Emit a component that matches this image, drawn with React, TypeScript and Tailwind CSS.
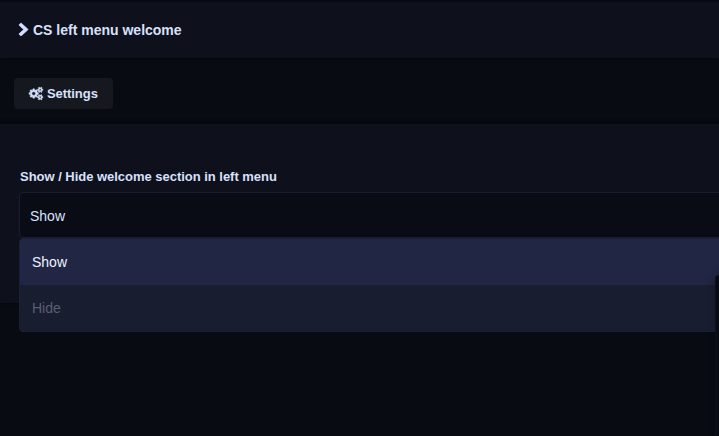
function ChevronIcon() {
  return (
    <svg viewBox="346 0 1036 1792" className="h-[14px] w-[9px] overflow-visible text-[#d3e1ff]" preserveAspectRatio="none" fill="currentColor" stroke="currentColor" strokeWidth="90" aria-hidden="true">
      <path d="M1363 877l-742 742q-19 19-45 19t-45-19l-166-166q-19-19-19-45t19-45l531-531-531-531q-19-19-19-45t19-45l166-166q19-19 45-19t45 19l742 742q19 19 19 45t-19 45z" />
    </svg>
  );
}

const SMALL_COG =
  "m640 533v140q0 16-149 31-12 27-30 52 51 113 51 138 0 4-4 7-122 71-124 71-8 0-46-47t-52-68q-20 2-30 2t-30-2q-14 21-52 68t-46 47q-2 0-124-71-4-3-4-7 0-25 51-138-18-25-30-52-149-15-149-31v-140q0-16 149-31 13-29 30-52-51-113-51-138 0-4 4-7 4-2 35-20t59-34 30-16q8 0 46 46.500t52 67.500q20-2 30-2t30 2q51-71 92-112l6-2q4 0 124 70 4 3 4 7 0 25-51 138 17 23 30 52 149 15 149 31z";

// Hub of a small cog, cut out of its body by the even-odd rule.
const SMALL_HUB =
  "M1664 1408q0-52-38-90t-90-38-90 38-38 90q0 53 37.500 90.500t90.500 37.500 90.500-37.500 37.500-90.500z";

function CogsIcon() {
  return (
    <svg viewBox="0 0 1920 1792" className="h-[13px] w-[14px] overflow-visible text-[#d3e1ff]" fill="currentColor" stroke="currentColor" strokeWidth="70" fillRule="evenodd" aria-hidden="true">
      <path d="M896 896q0-106-75-181t-181-75-181 75-75 181 75 181 181 75 181-75 75-181zM1280 805v185q0 10-7 19.500t-16 10.500l-155 24q-11 35-32 76 34 48 90 115 7 11 7 20 0 12-7 19-23 30-82.500 89.500t-78.500 59.500q-11 0-21-7l-115-90q-37 19-77 31-11 108-23 155-7 24-30 24h-186q-11 0-20-7.500t-10-17.500l-23-153q-34-10-75-31l-118 89q-7 7-20 7-11 0-21-8-144-133-144-160 0-9 7-19 10-14 41-53t47-61q-23-44-35-82l-152-24q-10-1-17-9.500t-7-19.500v-185q0-10 7-19.500t16-10.500l155-24q11-35 32-76-34-48-90-115-7-11-7-20 0-12 7-20 22-30 82-89t79-59q11 0 21 7l115 90q34-18 77-32 11-108 23-154 7-24 30-24h186q11 0 20 7.500t10 17.500l23 153q34 10 75 31l118-89q8-7 20-7 11 0 21 8 144 133 144 160 0 8-7 19-12 16-42 54t-45 60q23 48 34 82l152 23q10 2 17 10.500t7 19.500z" />
      <path d={`${SMALL_HUB}M1280 805${SMALL_COG}`} />
      <path d={`${SMALL_HUB}M1280 805${SMALL_COG}`} transform="translate(0 -1024)" />
    </svg>
  );
}

function Header() {
  return (
    <header className="flex h-14 shrink-0 items-center gap-[5px] bg-[#0e101c] pl-[19px] text-sm font-bold shadow-[0_1px_3px_rgba(0,0,0,0.45)]">
      <ChevronIcon />
      <h1 className="leading-5">CS left menu welcome</h1>
    </header>
  );
}

function Toolbar() {
  return (
    <nav className="flex h-[61px] shrink-0 items-start pt-5 pl-3.5">
      <button className="flex h-[31px] w-[99px] items-center gap-1 rounded-[4px] bg-[#15181f] pl-[15px] text-[13px] font-bold">
        <CogsIcon />
        <span className="tracking-[-0.06px]">Settings</span>
      </button>
    </nav>
  );
}

function Select() {
  return (
    <div className="relative w-[720px] text-sm">
      <div className="flex h-[46px] items-center rounded-[4px] border border-[#191d31] bg-[#0a0c15] pt-0.5 pl-2.5">
        Show
      </div>
      <ul className="absolute top-[46px] left-0 w-full overflow-hidden rounded-[4px] border border-[#1b2037] bg-[#191d30]">
        <li className="flex h-[46px] items-center bg-[#202643] pl-3 text-[#eef2ff]">Show</li>
        <li className="flex h-[46px] items-center pl-3 text-[#5d5f73]">Hide</li>
      </ul>
    </div>
  );
}

export default function App() {
  return (
    <div className="relative flex h-[436px] w-full flex-col overflow-hidden bg-[#080b12] pt-0.5 font-['Liberation_Sans',Arial,sans-serif] text-[#d8e1fb]">
      <Header />
      <Toolbar />
      <div className="h-[5px] shrink-0 bg-[#070910]" />
      <main className="h-[179px] shrink-0 bg-[#0e101b] pt-[43px] pl-[19px] shadow-[0_1px_3px_rgba(0,0,0,0.45)]">
        <label className="block h-[25px] pl-px text-[13px] leading-5 font-bold tracking-[-0.025px]">
          Show / Hide welcome section in left menu
        </label>
        <Select />
      </main>
      <aside className="absolute top-[275px] -right-4 bottom-0 w-5 rounded-tl-[4px] border-l border-[#0d0f19] bg-[#080a14] shadow-[0_0_8px_rgba(0,0,0,0.25)]" />
    </div>
  );
}
